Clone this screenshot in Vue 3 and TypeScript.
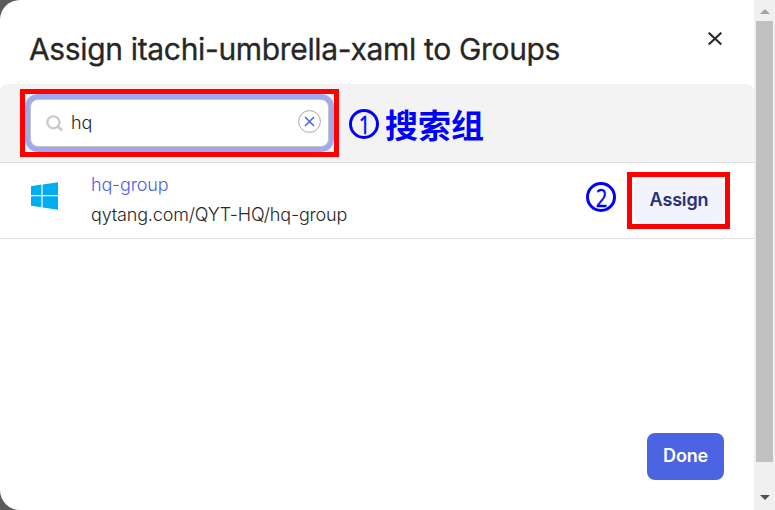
<script setup lang="ts">
import { ref } from 'vue'

interface Group {
  name: string
  path: string
}

const appName = 'itachi-umbrella-xaml'
const query = ref<string>('hq')
const groups: Group[] = [{ name: 'hq-group', path: 'qytang.com/QYT-HQ/hq-group' }]
</script>

<template>
  <div class="screen">
    <main class="dialog">
      <header class="header">
        <h1 class="title">Assign {{ appName }} to Groups</h1>
        <button class="close" aria-label="Close">
          <svg width="14" height="14" viewBox="0 0 14 14">
            <path d="M0.7 0.7L13.3 12.6M13.3 0.7L0.7 12.6" fill="none" stroke="#272727" stroke-width="2.1" />
          </svg>
        </button>
      </header>

      <section class="toolbar">
        <div class="marker search-marker">
          <label class="search">
            <svg class="lens" width="18" height="18" viewBox="0 0 18 18">
              <circle cx="7.4" cy="7.3" r="6" fill="none" stroke="#cbcbcb" stroke-width="2.3" />
              <path d="M11.8 11.5L16.2 15.6" stroke="#cbcbcb" stroke-width="2.8" />
            </svg>
            <input v-model="query" class="field" type="text" aria-label="Search" />
            <button class="clear" aria-label="Clear" @click="query = ''">
              <svg width="23" height="23" viewBox="0 0 23 23">
                <circle cx="11.5" cy="11.5" r="10.9" fill="#fff" stroke="#a6a6a6" stroke-width="1" />
                <path d="M7 7L16 16M16 7L7 16" stroke="#4c62e0" stroke-width="1.5" />
              </svg>
            </button>
          </label>
        </div>
        <div class="note"><span class="step"><span class="digit">1</span></span><b class="note-text">搜索组</b></div>
      </section>

      <section class="list">
        <div v-for="group in groups" :key="group.path" class="row">
          <svg class="logo" width="28" height="28" viewBox="0 0 28 28">
            <path
              d="M0 4.2L10.4 2.6V13H0ZM11.6 2.4L27 0.2V13H11.6ZM0 14.2H10.4V25.3L0 23.7ZM11.6 14.2H27V27.7L11.6 25.5Z"
              fill="#00adef"
            />
          </svg>
          <div class="info">
            <a class="name">{{ group.name }}</a>
            <span class="path">{{ group.path }}</span>
          </div>
          <span class="step step-two"><span class="digit">2</span></span>
          <div class="marker assign-marker">
            <button class="assign">Assign</button>
          </div>
        </div>
      </section>

      <footer class="footer">
        <button class="done">Done</button>
      </footer>
    </main>

    <aside class="scrollbar">
      <svg class="arrow" width="10" height="5" viewBox="0 0 10 5"><path d="M0 5L5 0L10 5Z" fill="#a3a3a3" /></svg>
      <div class="thumb"></div>
      <svg class="arrow down" width="10" height="5" viewBox="0 0 10 5"><path d="M0 0H10L5 5Z" fill="#505050" /></svg>
    </aside>
  </div>
</template>

<style>
body {
  margin: 0;
  background: #5b5b5b;
}
</style>

<style scoped>
* {
  box-sizing: border-box;
}
.screen {
  display: flex;
  width: 775px;
  height: 510px;
  overflow: hidden;
  background: #5b5b5b;
  font-family: Inter, 'Liberation Sans', sans-serif;
  color: #272727;
}
button {
  padding: 0;
  border: 0;
  background: none;
  font-family: inherit;
}
.dialog {
  display: flex;
  flex-direction: column;
  width: 754px;
  background: #fff;
  border-radius: 20px 0 0 20px;
}
.header {
  display: flex;
  justify-content: space-between;
  height: 84px;
  padding: 31px 32px 0 29px;
}
.title {
  margin: 0;
  font-size: 30px;
  line-height: 36px;
  font-weight: 400;
  letter-spacing: -0.34px;
  white-space: nowrap;
  -webkit-text-stroke: 0.3px #272727;
}
.close {
  width: 14px;
  height: 14px;
  margin-top: 1px;
}
.close svg,
.clear svg {
  display: block;
}
.toolbar {
  display: flex;
  align-items: flex-start;
  height: 79px;
  padding: 5px 0 0 20px;
  background: #f3f3f3;
  border-bottom: 1px solid #dedede;
  border-radius: 8px 8px 0 0;
}
.marker {
  border: 5px solid #f00;
}
.search-marker {
  width: 319px;
  height: 68px;
  padding: 5px;
}
.search {
  display: flex;
  align-items: center;
  width: 299px;
  height: 48px;
  padding: 0 7px 0 15px;
  background: #fff;
  border: 1px solid #c4c4c4;
  border-radius: 8px;
  box-shadow: 0 0 0 5px #9fa9f0;
}
.lens {
  flex: none;
  margin-top: 1px;
}
.field {
  flex: 1;
  min-width: 0;
  margin-left: 7px;
  padding: 0;
  border: 0;
  outline: 0;
  background: none;
  font: 300 18px/24px Inter, sans-serif;
  letter-spacing: -0.15px;
  color: #272727;
}
.clear {
  width: 23px;
  height: 23px;
  margin-top: -3px;
}
.note {
  display: flex;
  align-items: center;
  height: 48px;
  margin: 11px 0 0 10px;
}
.step {
  display: flex;
  flex: none;
  align-items: center;
  justify-content: center;
  width: 30px;
  height: 30px;
  border: 3px solid #00f;
  border-radius: 50%;
  color: #00f;
  font: 400 26px/24px 'Open Sans', sans-serif;
}
.digit {
  transform: scaleX(0.78);
  -webkit-text-stroke: 0.4px #00f;
}
.note-text {
  margin-left: 6px;
  font: 700 33px/48px 'Noto Sans CJK SC', sans-serif;
  color: #00f;
}
.row {
  display: flex;
  align-items: flex-start;
  height: 76px;
  padding: 9px 24px 0 31px;
  border-bottom: 1px solid #dedede;
}
.logo {
  flex: none;
  margin-top: 10px;
}
.info {
  display: flex;
  flex: 1;
  flex-direction: column;
  margin-left: 32px;
  margin-top: -2px;
  font-size: 18px;
  line-height: 30px;
  font-weight: 300;
  letter-spacing: -0.17px;
}
.name {
  color: #4c62e0;
}
.step-two {
  margin: 10px 11px 0 0;
}
.assign-marker {
  width: 103px;
  height: 57px;
  padding: 0 1px 0 2px;
}
.assign {
  width: 90px;
  height: 47px;
  padding-bottom: 2px;
  border-radius: 8px;
  background: #f2f3fc;
  color: #25317c;
  font-size: 18px;
  font-weight: 600;
  letter-spacing: -0.15px;
}
.footer {
  display: flex;
  justify-content: flex-end;
  margin-top: auto;
  padding: 0 30px 30px;
}
.done {
  width: 77px;
  height: 47px;
  padding-bottom: 2px;
  border-radius: 8px;
  background: #4c64e2;
  color: #fff;
  font-size: 18px;
  font-weight: 600;
  letter-spacing: -0.2px;
}
.scrollbar {
  display: flex;
  flex-direction: column;
  align-items: center;
  width: 21px;
  padding: 9px 0 10px;
  background: #f0f0f0;
}
.arrow {
  display: block;
}
.thumb {
  width: 17px;
  height: 441px;
  margin-top: 7px;
  background: #c1c1c1;
}
.down {
  margin-top: auto;
}
</style>
